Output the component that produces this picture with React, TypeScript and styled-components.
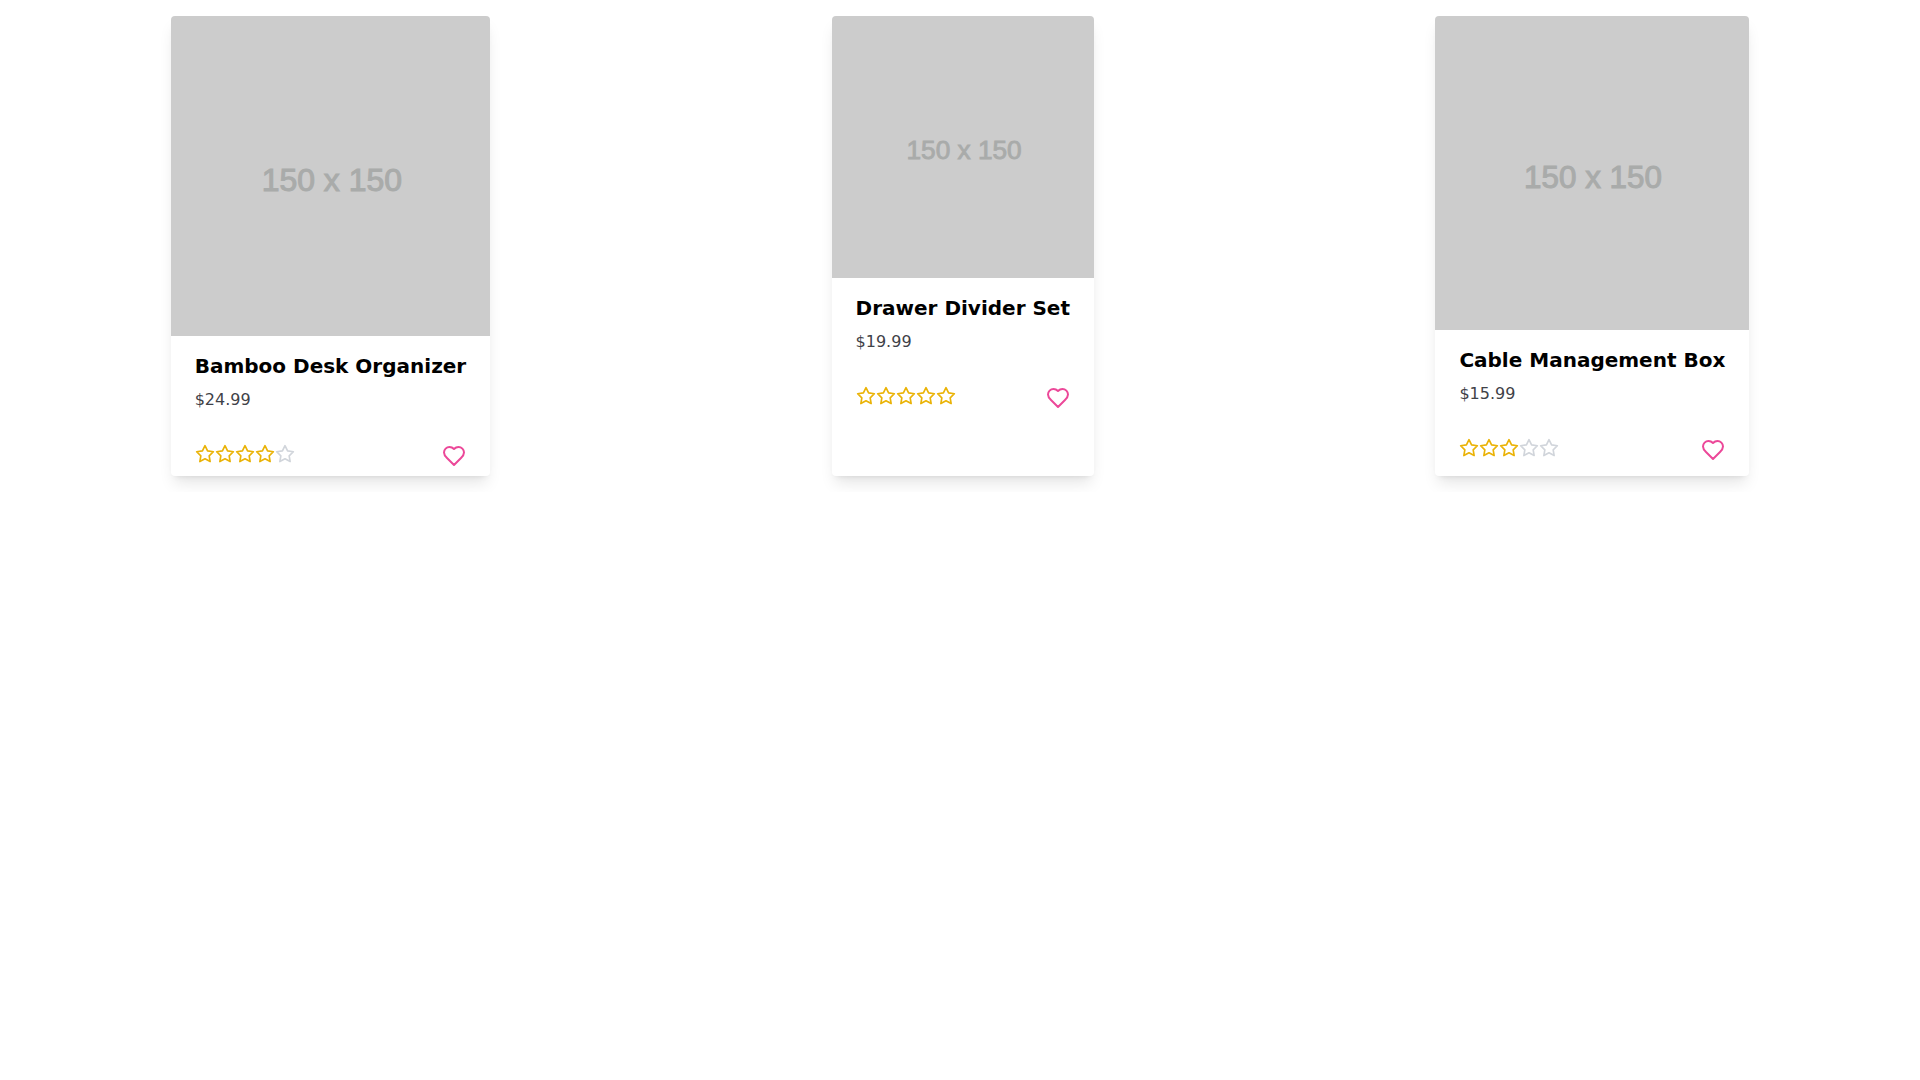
import React, { useState } from "react";
import styled, { createGlobalStyle } from "styled-components";

const GlobalStyle = createGlobalStyle`
  *, *::before, *::after {
    box-sizing: border-box;
  }
  body {
    margin: 0;
    background: #fff;
    color: #000;
    font-family: "DejaVu Sans", sans-serif;
    font-size: 16px;
    line-height: 24px;
  }
`;

const ProductList = styled.main`
  display: flex;
  flex-wrap: wrap;
  justify-content: space-around;
  row-gap: 16px;
  padding: 16px 0;
`;

const Card = styled.article`
  overflow: hidden;
  max-width: 384px;
  border-radius: 4px;
  background: #fff;
  box-shadow: 0 10px 15px -3px rgba(0, 0, 0, 0.1),
    0 4px 6px -4px rgba(0, 0, 0, 0.1);
`;

const Picture = styled.svg`
  display: block;
  width: 100%;
  height: auto;
  background: #ccc;
`;

const PictureLabel = styled.text`
  fill: #a9abaa;
  stroke: #a9abaa;
  stroke-width: 0.5;
  font-family: "Liberation Sans", sans-serif;
  font-size: 15px;
  text-anchor: middle;
`;

const Details = styled.div`
  padding: 16px 24px;
`;

const Title = styled.h2`
  margin: 0 0 8px;
  font-size: 20px;
  font-weight: 700;
  line-height: 28px;
`;

const Price = styled.p`
  margin: 0;
  color: #3f4248;
`;

const Footer = styled.div`
  display: flex;
  align-items: flex-start;
  justify-content: space-between;
  padding: 16px 24px 8px;
`;

const Rating = styled.div`
  display: flex;
`;

const Icon = styled.svg<{ $size: number }>`
  display: block;
  width: ${({ $size }) => $size}px;
  height: ${({ $size }) => $size}px;
  fill: none;
  stroke: currentColor;
  stroke-width: 2;
  stroke-linecap: round;
  stroke-linejoin: round;
`;

const Star = styled(Icon)<{ $filled: boolean }>`
  color: ${({ $filled }) => ($filled ? "#eab308" : "#d1d5db")};
`;

const LikeButton = styled.button<{ $liked: boolean }>`
  display: block;
  padding: 0;
  border: 0;
  background: none;
  color: ${({ $liked }) => ($liked ? "#be185d" : "#ec4899")};
  cursor: pointer;
`;

interface Product {
  name: string;
  price: string;
  rating: number;
}

const products: Product[] = [
  { name: "Bamboo Desk Organizer", price: "$24.99", rating: 4 },
  { name: "Drawer Divider Set", price: "$19.99", rating: 5 },
  { name: "Cable Management Box", price: "$15.99", rating: 3 },
];

function ProductCard({ name, price, rating }: Product) {
  const [liked, setLiked] = useState(false);

  return (
    <Card>
      <Picture width="150" height="150" viewBox="0 0 150 150" role="img" aria-label={name}>
        <PictureLabel x="75.5" y="82">
          150 x 150
        </PictureLabel>
      </Picture>
      <Details>
        <Title>{name}</Title>
        <Price>{price}</Price>
      </Details>
      <Footer>
        <Rating role="img" aria-label={`${rating} out of 5 stars`}>
          {[1, 2, 3, 4, 5].map((value) => (
            <Star key={value} $size={20} $filled={value <= rating} viewBox="0 0 24 24">
              <polygon points="12 2 15.09 8.26 22 9.27 17 14.14 18.18 21.02 12 17.77 5.82 21.02 7 14.14 2 9.27 8.91 8.26 12 2" />
            </Star>
          ))}
        </Rating>
        <LikeButton
          type="button"
          $liked={liked}
          aria-pressed={liked}
          aria-label={`Add ${name} to favourites`}
          onClick={() => setLiked(!liked)}
        >
          <Icon $size={24} viewBox="0 0 24 24">
            <path d="M19 14c1.49-1.46 3-3.21 3-5.5A5.5 5.5 0 0 0 16.5 3c-1.76 0-3 .5-4.5 2-1.5-1.5-2.74-2-4.5-2A5.5 5.5 0 0 0 2 8.5c0 2.3 1.5 4.05 3 5.5l7 7Z" />
          </Icon>
        </LikeButton>
      </Footer>
    </Card>
  );
}

export default function App() {
  return (
    <>
      <GlobalStyle />
      <ProductList>
        {products.map((product) => (
          <ProductCard key={product.name} {...product} />
        ))}
      </ProductList>
    </>
  );
}
